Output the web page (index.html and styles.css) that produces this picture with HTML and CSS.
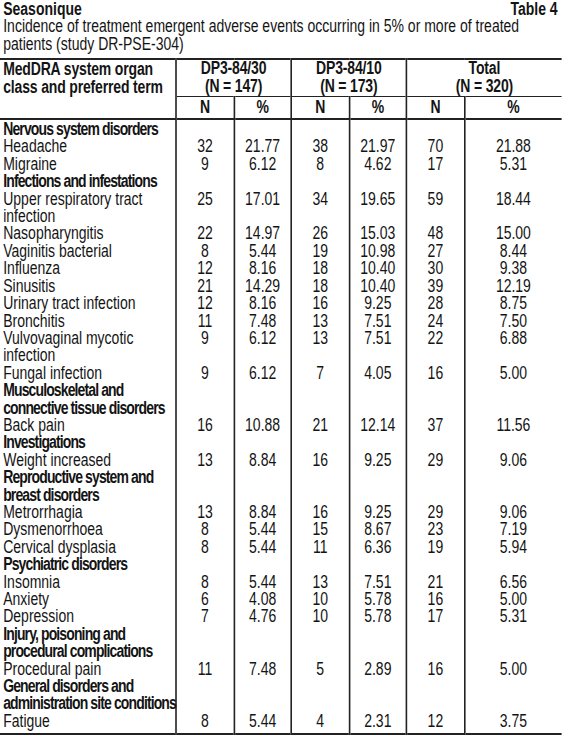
FILE: index.html
```html
<!DOCTYPE html>
<html lang="en">
<head>
    <meta charset="UTF-8">
    <title>Seasonique - Table 4</title>
    <link rel="stylesheet" href="styles.css">
</head>
<body>

<div class="page">
<div class="wrap">
    <div class="caption">
        <span class="brand">Seasonique</span>
        <span class="tableNo">Table 4</span>
    </div>
    <p class="title">Incidence of treatment emergent adverse events occurring in 5% or more of treated patients (study DR-PSE-304)</p>

    <table class="ae">
        <colgroup>
            <col class="cTerm"/>
            <col class="cN"/><col class="cPct"/>
            <col class="cN"/><col class="cPct"/>
            <col class="cN"/><col/>
        </colgroup>
        <thead>
            <tr class="groups">
                <th class="term" rowspan="2">MedDRA system organ<br/>class and preferred term</th>
                <th colspan="2">DP3-84/30<br/>(N = 147)</th>
                <th colspan="2">DP3-84/10<br/>(N = 173)</th>
                <th colspan="2">Total<br/>(N = 320)</th>
            </tr>
            <tr class="sub">
                <th>N</th><th>%</th>
                <th>N</th><th>%</th>
                <th>N</th><th>%</th>
            </tr>
        </thead>
        <tbody>
            <tr class="first"><td class="soc">Nervous system disorders</td><td></td><td></td><td></td><td></td><td></td><td></td></tr>
            <tr><td>Headache</td><td>32</td><td>21.77</td><td>38</td><td>21.97</td><td>70</td><td>21.88</td></tr>
            <tr><td>Migraine</td><td>9</td><td>6.12</td><td>8</td><td>4.62</td><td>17</td><td>5.31</td></tr>
            <tr><td class="soc">Infections and infestations</td><td></td><td></td><td></td><td></td><td></td><td></td></tr>
            <tr><td>Upper respiratory tract<br/>infection</td><td>25</td><td>17.01</td><td>34</td><td>19.65</td><td>59</td><td>18.44</td></tr>
            <tr><td>Nasopharyngitis</td><td>22</td><td>14.97</td><td>26</td><td>15.03</td><td>48</td><td>15.00</td></tr>
            <tr><td>Vaginitis bacterial</td><td>8</td><td>5.44</td><td>19</td><td>10.98</td><td>27</td><td>8.44</td></tr>
            <tr><td>Influenza</td><td>12</td><td>8.16</td><td>18</td><td>10.40</td><td>30</td><td>9.38</td></tr>
            <tr><td>Sinusitis</td><td>21</td><td>14.29</td><td>18</td><td>10.40</td><td>39</td><td>12.19</td></tr>
            <tr><td>Urinary tract infection</td><td>12</td><td>8.16</td><td>16</td><td>9.25</td><td>28</td><td>8.75</td></tr>
            <tr><td>Bronchitis</td><td>11</td><td>7.48</td><td>13</td><td>7.51</td><td>24</td><td>7.50</td></tr>
            <tr><td>Vulvovaginal mycotic<br/>infection</td><td>9</td><td>6.12</td><td>13</td><td>7.51</td><td>22</td><td>6.88</td></tr>
            <tr><td>Fungal infection</td><td>9</td><td>6.12</td><td>7</td><td>4.05</td><td>16</td><td>5.00</td></tr>
            <tr><td class="soc">Musculoskeletal and<br/>connective tissue disorders</td><td></td><td></td><td></td><td></td><td></td><td></td></tr>
            <tr><td>Back pain</td><td>16</td><td>10.88</td><td>21</td><td>12.14</td><td>37</td><td>11.56</td></tr>
            <tr><td class="soc">Investigations</td><td></td><td></td><td></td><td></td><td></td><td></td></tr>
            <tr><td>Weight increased</td><td>13</td><td>8.84</td><td>16</td><td>9.25</td><td>29</td><td>9.06</td></tr>
            <tr><td class="soc">Reproductive system and<br/>breast disorders</td><td></td><td></td><td></td><td></td><td></td><td></td></tr>
            <tr><td>Metrorrhagia</td><td>13</td><td>8.84</td><td>16</td><td>9.25</td><td>29</td><td>9.06</td></tr>
            <tr><td>Dysmenorrhoea</td><td>8</td><td>5.44</td><td>15</td><td>8.67</td><td>23</td><td>7.19</td></tr>
            <tr><td>Cervical dysplasia</td><td>8</td><td>5.44</td><td>11</td><td>6.36</td><td>19</td><td>5.94</td></tr>
            <tr><td class="soc">Psychiatric disorders</td><td></td><td></td><td></td><td></td><td></td><td></td></tr>
            <tr><td>Insomnia</td><td>8</td><td>5.44</td><td>13</td><td>7.51</td><td>21</td><td>6.56</td></tr>
            <tr><td>Anxiety</td><td>6</td><td>4.08</td><td>10</td><td>5.78</td><td>16</td><td>5.00</td></tr>
            <tr><td>Depression</td><td>7</td><td>4.76</td><td>10</td><td>5.78</td><td>17</td><td>5.31</td></tr>
            <tr><td class="soc">Injury, poisoning and<br/>procedural complications</td><td></td><td></td><td></td><td></td><td></td><td></td></tr>
            <tr><td>Procedural pain</td><td>11</td><td>7.48</td><td>5</td><td>2.89</td><td>16</td><td>5.00</td></tr>
            <tr><td class="soc">General disorders and<br/>administration site conditions</td><td></td><td></td><td></td><td></td><td></td><td></td></tr>
            <tr class="last"><td>Fatigue</td><td>8</td><td>5.44</td><td>4</td><td>2.31</td><td>12</td><td>3.75</td></tr>
        </tbody>
    </table>
</div>
</div>

</body>
</html>
```

FILE: styles.css
```css
body,p,table,th,td{ margin: 0; padding: 0;}
/* reset */

body{
    background: #ffffff;
    color: #141414;
    font-family: "Liberation Sans", Arial, sans-serif;
    font-size: 17.5px;
    line-height: 17.4px;
    overflow: hidden;
}
.page{
    width: 562px;
    overflow: hidden;
}
/* the print uses a condensed face: squeeze the whole sheet horizontally */
.wrap{
    width: 702px;
    transform: scaleX(0.8);
    transform-origin: 0 0;
}
.caption{
    display: flex;
    justify-content: space-between;
    padding: 1px 5px 0 4px;
    font-weight: bold;
}
.title{
    padding: 0 4px;
}
.ae{
    width: 702px;
    margin-top: 5px;
    border-collapse: collapse;
    table-layout: fixed;
    border-top: 2px solid #222;
    border-bottom: 2px solid #222;
}
.ae .cTerm{ width: 220px;}
.ae .cN{ width: 72.5px;}
.ae .cPct{ width: 71.5px;}

.ae th{
    font-weight: bold;
    text-align: center;
    vertical-align: top;
    letter-spacing: -0.2px;
}
.ae th + th, .ae td + td, .ae .sub th{
    border-left: 2.5px solid #222;
}
.ae .groups th{
    padding: 0 0 1px;
    border-bottom: 1px solid #222;
}
.ae .groups th.term{
    text-align: left;
    padding-top: 1px;
    padding-left: 4px;
    border-bottom: 2px solid #222;
}
.ae .sub th{
    height: 21px;
    line-height: 21px;
    border-bottom: 2px solid #222;
}
.ae td{
    text-align: center;
    vertical-align: top;
    white-space: nowrap;
}
.ae td:first-child{
    text-align: left;
    padding-left: 4px;
}
.ae .soc{
    font-weight: bold;
    letter-spacing: -1.1px;
}
.ae .first td{
    padding-top: 1px;
}
.ae .last td{
    padding-bottom: 3px;
}
```
